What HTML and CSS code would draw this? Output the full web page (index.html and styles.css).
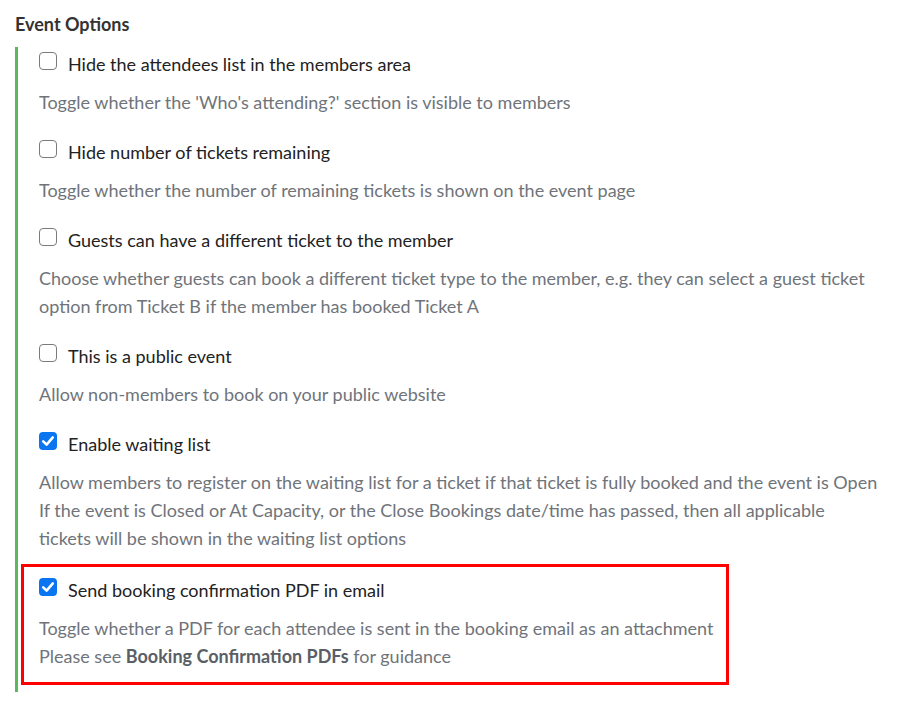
FILE: index.html
```html
<!DOCTYPE html>
<html>
<head>
<meta charset="utf-8">
<link rel="stylesheet" href="styles.css">
</head>
<body>
<div class="page">
  <h2 class="title">Event Options</h2>
  <div class="options">
    <div class="option">
      <label class="label"><span class="box"></span>Hide the attendees list in the members area</label>
      <p class="desc">Toggle whether the 'Who's attending?' section is visible to members</p>
    </div>
    <div class="option">
      <label class="label"><span class="box"></span>Hide number of tickets remaining</label>
      <p class="desc">Toggle whether the number of remaining tickets is shown on the event page</p>
    </div>
    <div class="option">
      <label class="label"><span class="box"></span>Guests can have a different ticket to the member</label>
      <p class="desc">Choose whether guests can book a different ticket type to the member, e.g. they can select a guest ticket<br>option from Ticket B if the member has booked Ticket A</p>
    </div>
    <div class="option">
      <label class="label"><span class="box"></span>This is a public event</label>
      <p class="desc">Allow non-members to book on your public website</p>
    </div>
    <div class="option">
      <label class="label"><span class="box checked"><svg viewBox="0 0 18 18" width="18" height="18"><path d="M4.2 9.4 L7.6 12.6 L13.8 5.4" fill="none" stroke="#fff" stroke-width="2.6" stroke-linecap="round" stroke-linejoin="round"/></svg></span>Enable waiting list</label>
      <p class="desc">Allow members to register on the waiting list for a ticket if that ticket is fully booked and the event is Open<br>If the event is Closed or At Capacity, or the Close Bookings date/time has passed, then all applicable<br>tickets will be shown in the waiting list options</p>
    </div>
    <div class="option highlight">
      <label class="label"><span class="box checked"><svg viewBox="0 0 18 18" width="18" height="18"><path d="M4.2 9.4 L7.6 12.6 L13.8 5.4" fill="none" stroke="#fff" stroke-width="2.6" stroke-linecap="round" stroke-linejoin="round"/></svg></span>Send booking confirmation PDF in email</label>
      <p class="desc">Toggle whether a PDF for each attendee is sent in the booking email as an attachment<br>Please see <b>Booking Confirmation PDFs</b> for guidance</p>
    </div>
  </div>
</div>
</body>
</html>
```

FILE: styles.css
```css
html, body {
  margin: 0;
  padding: 0;
  background: #ffffff;
}
body {
  font-family: Lato, "Open Sans", sans-serif;
  font-size: 18px;
  color: #2b2b2b;
}
.page {
  padding: 11px 0 0 15px;
}
.title {
  margin: 0;
  font-size: 18px;
  font-weight: 700;
  line-height: 26px;
  color: #333333;
}
.options {
  margin-top: 10px;
  border-left: 3px solid #5cb85c;
  padding: 3px 0 7px 3px;
  display: flex;
  flex-direction: column;
  gap: 22px;
  width: fit-content;
}
.option {
  padding-left: 18px;
}
.label {
  display: flex;
  align-items: center;
  height: 28px;
  line-height: 28px;
  font-size: 18px;
  color: #222222;
}
.box {
  width: 16px;
  height: 16px;
  border: 1.5px solid #7a7a7a;
  border-radius: 4px;
  margin-right: 11px;
  margin-top: -6px;
  flex: none;
  display: inline-flex;
  box-sizing: content-box;
}
.box.checked {
  width: 18px;
  height: 18px;
  border: none;
  background: #0a75f0;
}
.desc {
  margin: 10px 0 0;
  line-height: 28px;
  font-size: 18px;
  color: #6f747a;
}
.desc b {
  font-weight: 700;
  color: #5a5f66;
}
.highlight {
  margin-top: -10px;
  border: 3px solid #ff0000;
  padding: 9px 10px 12px 15px;
  width: 708px;
  box-sizing: border-box;
}
```
